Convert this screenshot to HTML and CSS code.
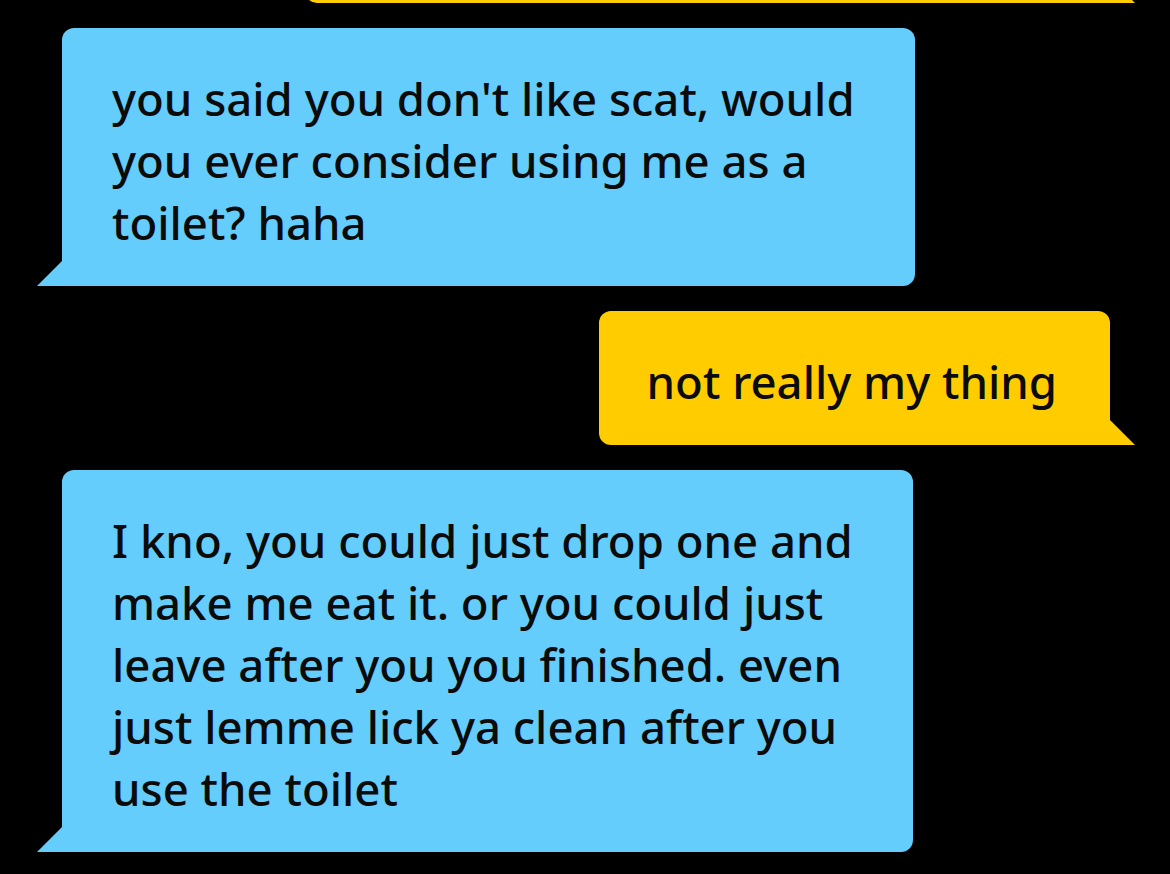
FILE: index.html
```html
<!DOCTYPE html>
<html lang="en">

<head>
    <meta charset="UTF-8">
    <meta name="viewport" content="width=device-width, initial-scale=1.0">
    <title>Chat</title>
    <link rel="stylesheet" href="styles.css">
</head>

<body>
    <div id="chat">
        <div class="bubble sent cut"></div>
        <div class="bubble received">
            you said you don't like scat, would<br>
            you ever consider using me as a<br>
            toilet? haha
        </div>
        <div class="bubble sent">not really my thing</div>
        <div class="bubble received">
            I kno, you could just drop one and<br>
            make me eat it. or you could just<br>
            leave after you you finished. even<br>
            just lemme lick ya clean after you<br>
            use the toilet
        </div>
    </div>
</body>

</html>
```

FILE: styles.css
```css
body {
    background-color: #000;
    margin: 0;
    padding: 0;
    font-family: 'Noto Sans', 'Open Sans', sans-serif;
    color: #0b0b0b;
}

#chat {
    display: flex;
    flex-direction: column;
    gap: 25px;
    padding: 0 60px 0 62px;
    overflow: hidden;
    height: 874px;
    box-sizing: border-box;
}

.bubble {
    position: relative;
    width: fit-content;
    white-space: nowrap;
    font-size: 45.5px;
    font-weight: 500;
    line-height: 62px;
    padding: 39px 60px 33px 50px;
    border-radius: 12px;
}

.bubble::after {
    content: "";
    position: absolute;
    bottom: 0;
    width: 25px;
    height: 25px;
}

.received {
    background-color: #64cdfc;
    /* blue */
    border-bottom-left-radius: 0;
}

.received::after {
    left: -25px;
    background-color: #64cdfc;
    clip-path: polygon(100% 0, 100% 100%, 0 100%);
}

.sent {
    align-self: flex-end;
    background-color: #ffcc00;
    /* yellow */
    border-bottom-right-radius: 0;
    padding: 39px 53px 33px 48px;
}

.sent::after {
    right: -25px;
    background-color: #ffcc00;
    clip-path: polygon(0 0, 100% 100%, 0 100%);
}

.cut {
    width: 805px;
    height: 60px;
    padding: 0;
    margin-top: -57px;
    box-sizing: border-box;
}
```
